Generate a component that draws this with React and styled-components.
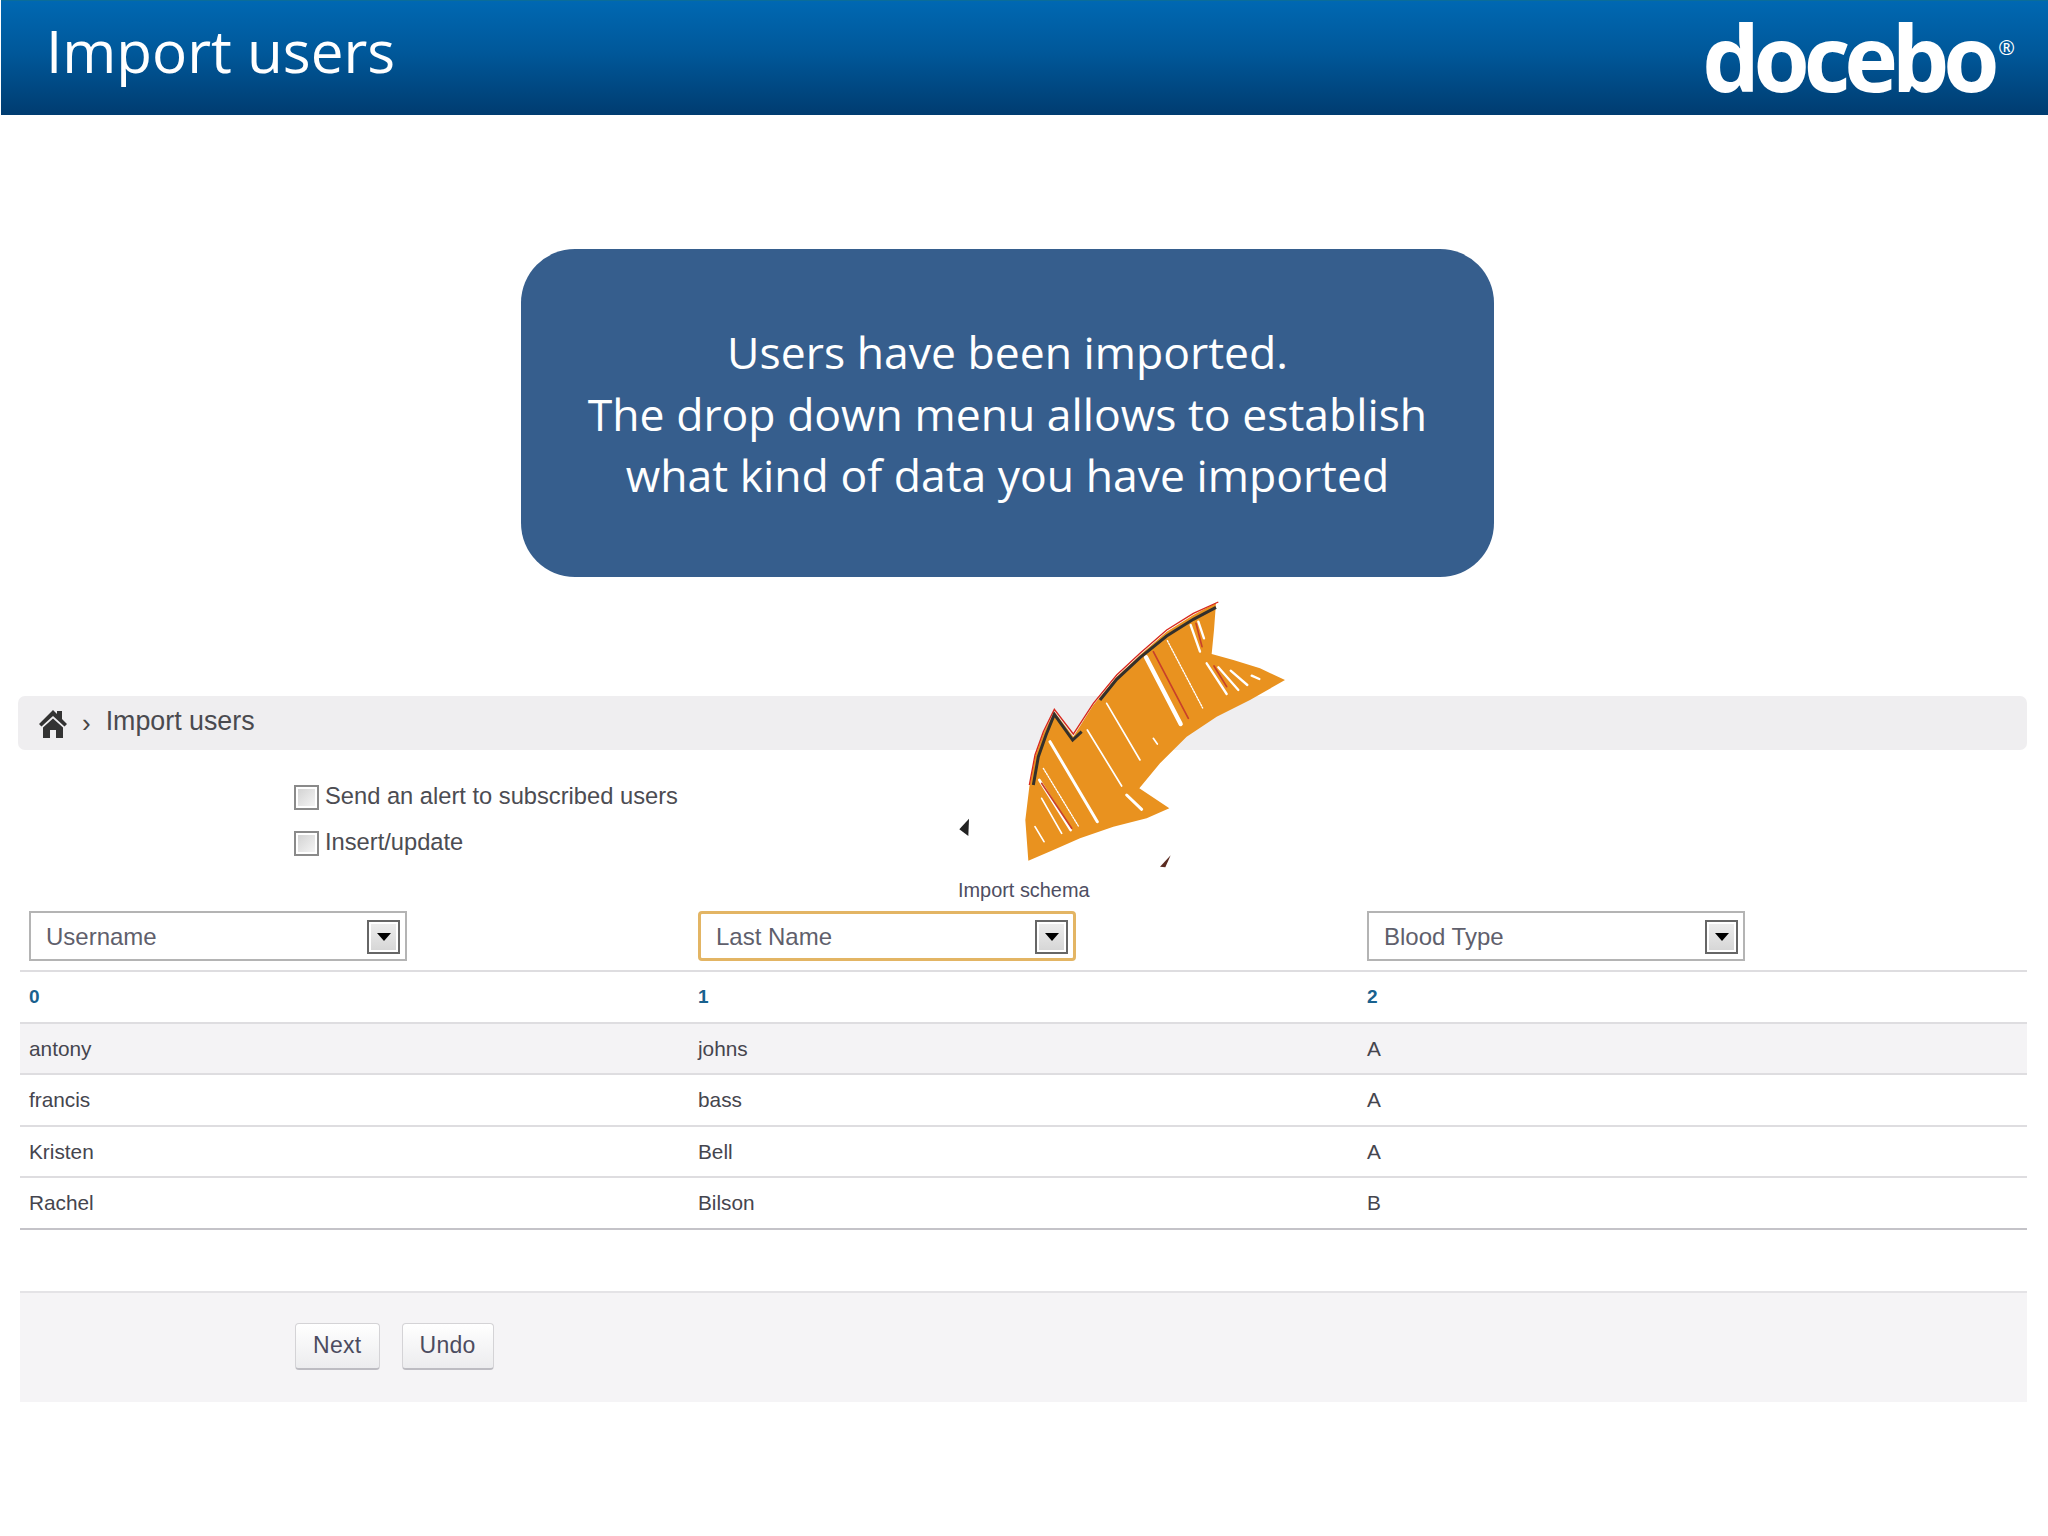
import React from 'react';
import styled, { createGlobalStyle } from 'styled-components';

const columns = [
    { id: '0', field: 'Username' },
    { id: '1', field: 'Last Name', focused: true },
    { id: '2', field: 'Blood Type' },
];

const rows = [
    ['antony', 'johns', 'A'],
    ['francis', 'bass', 'A'],
    ['Kristen', 'Bell', 'A'],
    ['Rachel', 'Bilson', 'B'],
];

const App = () => {
    return (
        <Page>
            <GlobalStyle />
            <Header>
                <HeaderTitle>Import users</HeaderTitle>
                <Logo>docebo<LogoMark>®</LogoMark></Logo>
            </Header>

            <Notice>
                Users have been imported.<br />
                The drop down menu allows to establish<br />
                what kind of data you have imported
            </Notice>

            <Content>
                <Breadcrumb>
                    <HomeIcon viewBox="0 0 28 28">
                        <path d="M14 0 L18 4 V1 H23 V9 L28 14 L25.5 16.5 L14 6 L2.5 16.5 L0 14 Z" />
                        <path d="M14 8.5 L24 17.5 V28 H17 V20 H11 V28 H4 V17.5 Z" />
                    </HomeIcon>
                    <Crumb>›</Crumb>
                    <CrumbText>Import users</CrumbText>
                </Breadcrumb>

                <Options>
                    <Option><CheckBox /><OptionText>Send an alert to subscribed users</OptionText></Option>
                    <Option><CheckBox /><OptionText>Insert/update</OptionText></Option>
                </Options>

                <SchemaLabel>Import schema</SchemaLabel>

                <SelectRow>
                    {columns.map((col) => (
                        <SelectCell key={col.id}>
                            <FakeSelect $focused={col.focused}>
                                {col.field}
                                <SelectButton><SelectCaret /></SelectButton>
                            </FakeSelect>
                        </SelectCell>
                    ))}
                </SelectRow>

                <Row>
                    {columns.map((col) => <HeadCell key={col.id}>{col.id}</HeadCell>)}
                </Row>
                {rows.map((row, i) => (
                    <Row key={row[0]} $shaded={i === 0} $last={i === rows.length - 1}>
                        {row.map((value, j) => <Cell key={j}>{value}</Cell>)}
                    </Row>
                ))}

                <Footer>
                    <Button>Next</Button>
                    <Button>Undo</Button>
                </Footer>
            </Content>

            <Arrow viewBox="0 0 1140 960">
                <path
                    fill="#e9921f"
                    d="M828 68 L760 105 L680 155 L600 225 L530 290 L460 375 L400 470 L343 395 L310 460 L285 530 L268 620 L256 720 L265 842 L340 810 L420 775 L520 740 L620 715 L688 685 L598 625 L660 550 L740 470 L830 410 L930 360 L1035 300 L960 265 L880 240 L815 222 L822 150 Z"
                />
                <g fill="none" stroke="#fff" strokeLinecap="round">
                    <path strokeWidth="13" d="M618 232 L722 432" />
                    <path strokeWidth="4" strokeDasharray="5 4" d="M682 182 L788 384" />
                    <path strokeWidth="7" d="M752 135 L780 215 M775 125 L792 175" />
                    <path strokeWidth="7" d="M800 250 L860 342 M835 262 L895 330 M872 272 L922 315 M935 287 L958 297" />
                    <path strokeWidth="5" d="M500 370 L600 540 M442 450 L545 618" />
                    <path strokeWidth="9" d="M560 645 L605 688" />
                    <path strokeWidth="9" d="M330 485 L472 725" />
                    <path strokeWidth="4" strokeDasharray="5 4" d="M310 565 L415 738" />
                    <path strokeWidth="8" d="M298 600 L392 750" />
                    <path strokeWidth="5" d="M305 655 L365 760 M285 740 L312 785 M640 475 L652 492" />
                </g>
                <g fill="none" stroke="#c8402a" strokeLinecap="round">
                    <path strokeWidth="5" d="M640 215 L745 415 M768 130 L786 200" />
                    <path strokeWidth="5" d="M822 258 L860 320" />
                    <path strokeWidth="5" d="M305 610 L395 745" />
                </g>
                <path
                    fill="none"
                    stroke="#d8281c"
                    strokeWidth="4"
                    d="M835 66 L760 100 L680 150 L600 220 L530 285 L460 370 L400 462 L343 388 L310 455 L285 525 L268 615"
                />
                <path
                    fill="none"
                    stroke="#33302c"
                    strokeWidth="9"
                    d="M828 82 L760 118 L680 168 L600 233 L530 298 L480 360 M425 455 L398 480 L343 403 L318 465 L295 530 L280 615"
                />
                <path fill="#222" d="M87 716 L58 748 L85 768 Z" />
                <path fill="#5a2a20" d="M692 826 L660 860 L676 862 Z" />
            </Arrow>
        </Page>
    );
}

const GlobalStyle = createGlobalStyle`
    body {
        margin: 0;
        background: #fff;
        font-family: "Liberation Sans", Arial, sans-serif;
    }
`;

const Page = styled.div`
    position: relative;
    width: 2048px;
    height: 1536px;
    overflow: hidden;
`;

const Header = styled.div`
    display: flex;
    justify-content: space-between;
    align-items: flex-start;
    height: 114px;
    margin-left: 1px;
    border-top: 1px solid #0b6d99;
    background: linear-gradient(#0068b2, #00589a 45%, #003c70);
`;

const HeaderTitle = styled.div`
    margin: 11px 0 0 45px;
    font-family: "Open Sans", sans-serif;
    font-size: 58.4px;
    line-height: 78px;
    color: #fff;
`;

const Logo = styled.div`
    flex-shrink: 0;
    margin: 6px 33px 0 0;
    padding-left: 8px;
    font-family: "Open Sans", sans-serif;
    font-weight: 700;
    font-size: 91px;
    line-height: 100px;
    letter-spacing: -6.2px;
    white-space: nowrap;
    color: #fff;
`;

const LogoMark = styled.span`
    margin-left: 5px;
    font-size: 20px;
    font-weight: 400;
    line-height: 0;
    letter-spacing: 0;
    vertical-align: 37px;
`;

const Notice = styled.div`
    width: 973px;
    height: 328px;
    margin: 134px 0 0 521px;
    padding-top: 72px;
    box-sizing: border-box;
    border-radius: 54px;
    background: #365e8d;
    color: #fff;
    font-family: "Open Sans", sans-serif;
    font-size: 44.5px;
    line-height: 61.5px;
    text-align: center;
`;

const Content = styled.div`
    margin: 119px 21px 0 20px;
`;

const Breadcrumb = styled.div`
    display: flex;
    align-items: center;
    height: 54px;
    margin-left: -2px;
    padding-left: 21px;
    border-radius: 7px;
    background: #efeef0;
    color: #444;
`;

const HomeIcon = styled.svg`
    width: 28px;
    height: 28px;
    margin-bottom: -1px;
    fill: #333;
`;

const Crumb = styled.span`
    margin: 0 15px 0 15px;
    font-size: 26px;
`;

const CrumbText = styled.span`
    margin-top: -4px;
    font-size: 26.8px;
    color: #4a4a4f;
`;

const Options = styled.div`
    display: flex;
    flex-direction: column;
    gap: 21px;
    margin-top: 35px;
    padding-left: 274px;
`;

const Option = styled.label`
    display: flex;
    align-items: center;
    gap: 6px;
    height: 25px;
    font-size: 23.7px;
    color: #4c4c52;
`;

const OptionText = styled.span`
    margin-top: -2px;
`;

const CheckBox = styled.span`
    width: 25px;
    height: 25px;
    box-sizing: border-box;
    border: 2px solid #8a8a8a;
    box-shadow: inset 0 0 0 2px #fff;
    background: linear-gradient(135deg, #cfcfcf, #f8f8f8);
`;

const SchemaLabel = styled.div`
    margin-top: 21px;
    padding-left: 938px;
    font-size: 19.9px;
    line-height: 26px;
    color: #4e4e62;
`;

const SelectRow = styled.div`
    display: grid;
    grid-template-columns: repeat(3, 669px);
    height: 67px;
    padding-top: 8px;
    box-sizing: border-box;
`;

const SelectCell = styled.div`
    padding-left: 9px;
`;

const FakeSelect = styled.div`
    display: flex;
    align-items: center;
    justify-content: space-between;
    width: 378px;
    height: 50px;
    box-sizing: border-box;
    padding: 1px 5px 0 15px;
    border: ${(props) => (props.$focused ? '3px solid #e3b564' : '2px solid #b4b4b4')};
    border-radius: ${(props) => (props.$focused ? '4px' : '0')};
    background: #fff;
    font-size: 24px;
    color: #5f5f6c;
`;

const SelectButton = styled.div`
    display: flex;
    align-items: center;
    justify-content: center;
    width: 33px;
    height: 34px;
    box-sizing: border-box;
    border: 2px solid #666;
    box-shadow: inset 0 0 0 2px #fff;
    background: linear-gradient(#eee, #d5d5d5);
`;

const SelectCaret = styled.span`
    width: 0;
    height: 0;
    border-left: 7px solid transparent;
    border-right: 7px solid transparent;
    border-top: 8px solid #000;
`;

const Row = styled.div`
    display: grid;
    grid-template-columns: repeat(3, 669px);
    align-items: center;
    height: ${(props) => (props.$last ? '53.5px' : '51.5px')};
    box-sizing: border-box;
    border-top: 2px solid #dedde0;
    border-bottom: ${(props) => (props.$last ? '2px solid #c4c3c8' : 'none')};
    background: ${(props) => (props.$shaded ? '#f4f3f5' : '#fff')};
`;

const HeadCell = styled.div`
    padding: 1px 0 0 9px;
    font-size: 19px;
    font-weight: 700;
    color: #19618e;
`;

const Cell = styled.div`
    padding: 1px 0 0 9px;
    font-size: 20.8px;
    color: #45454e;
`;

const Footer = styled.div`
    display: flex;
    align-items: flex-start;
    gap: 22px;
    height: 111px;
    margin-top: 61px;
    padding: 30px 0 0 275px;
    box-sizing: border-box;
    border-top: 2px solid #e4e3e6;
    background: #f5f4f6;
`;

const Button = styled.div`
    padding: 0 17px;
    height: 47px;
    box-sizing: border-box;
    line-height: 43px;
    font-size: 23px;
    letter-spacing: 0.3px;
    color: #4c4c60;
    border: 1px solid #d4d3d6;
    border-bottom: 2px solid #bdbcc2;
    border-radius: 4px;
    background: linear-gradient(#fff, #ececee);
`;

const Arrow = styled.svg`
    position: absolute;
    left: 940px;
    top: 580px;
    width: 380px;
    height: 320px;
`;

export default App;
